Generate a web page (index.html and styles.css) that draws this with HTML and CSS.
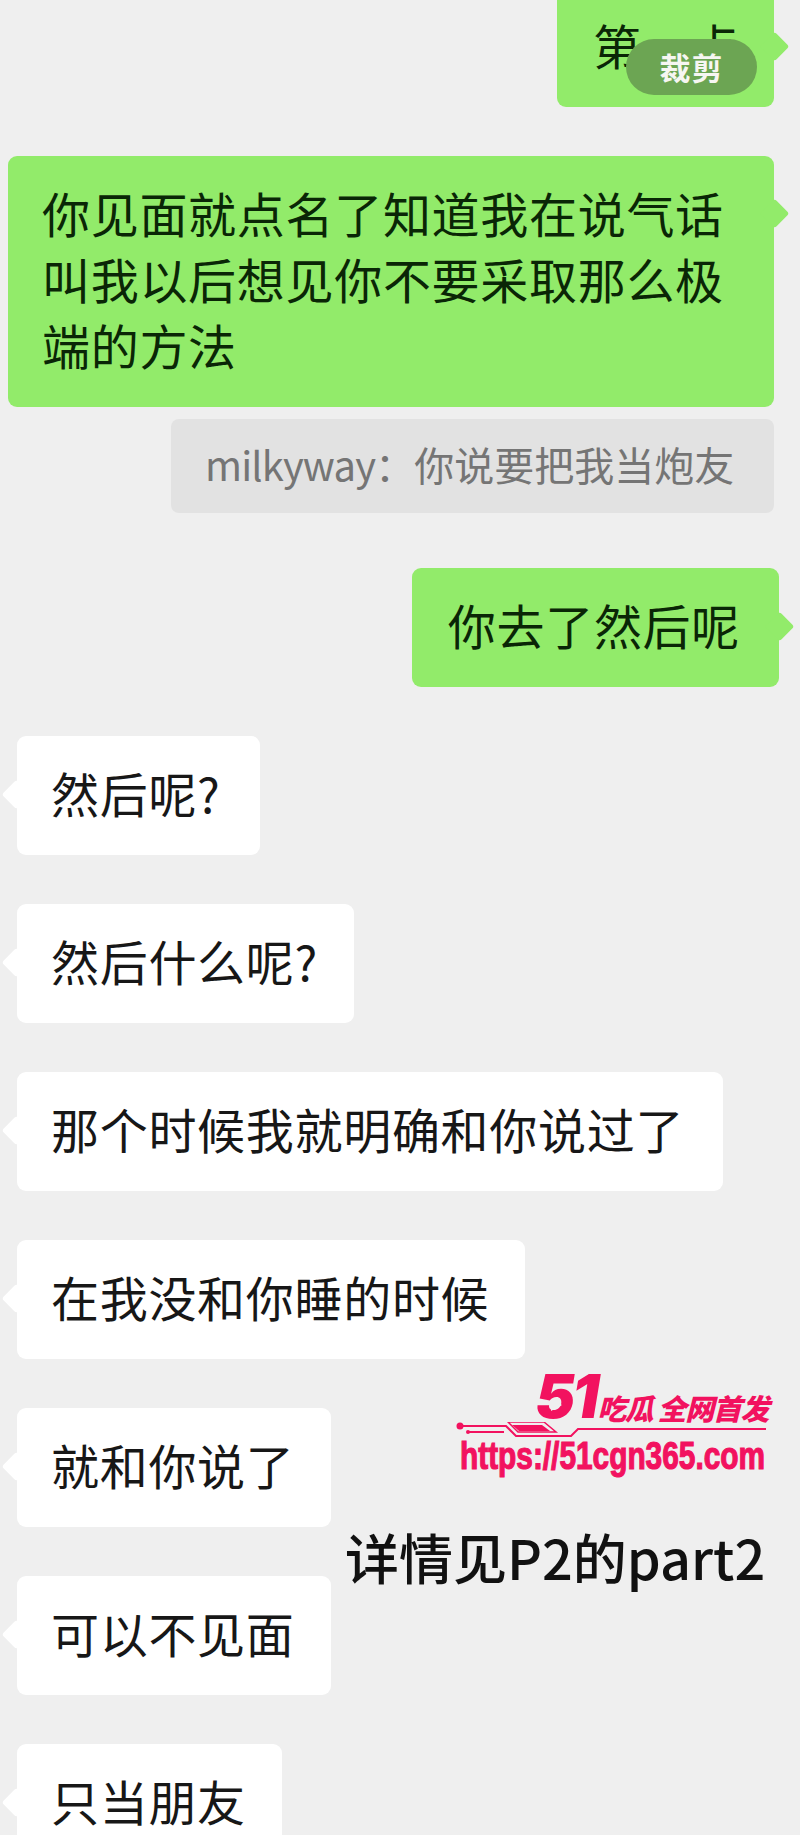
FILE: index.html
```html
<!DOCTYPE html>
<html lang="zh-CN">
<head>
<meta charset="utf-8">
<title>聊天记录</title>
<link rel="stylesheet" href="styles.css">
</head>
<body>
<main class="chat">
  <div class="row row-out">
    <div class="bubble out first">第一点<span class="crop">裁剪</span></div>
  </div>
  <div class="row row-out">
    <div class="bubble out wide">你见面就点名了知道我在说气话<br>叫我以后想见你不要采取那么极<br>端的方法</div>
  </div>
  <div class="row row-out row-quote">
    <div class="quote"><span class="quote-name">milkyway：</span>你说要把我当炮友</div>
  </div>
  <div class="row row-out row-after-quote">
    <div class="bubble out shifted">你去了然后呢</div>
  </div>
  <div class="row"><div class="bubble in roomy">然后呢?</div></div>
  <div class="row"><div class="bubble in">然后什么呢?</div></div>
  <div class="row"><div class="bubble in roomy">那个时候我就明确和你说过了</div></div>
  <div class="row"><div class="bubble in">在我没和你睡的时候</div></div>
  <div class="row"><div class="bubble in">就和你说了</div></div>
  <div class="row"><div class="bubble in">可以不见面</div></div>
  <div class="row"><div class="bubble in">只当朋友</div></div>
</main>

<aside class="stamp">
  <div class="stamp-top">
    <span class="stamp-num">51<svg class="stamp-play" width="14" height="14" viewBox="0 0 14 14" aria-hidden="true"><path d="M2 1L13 7L2 13Z" fill="#efefef"/></svg></span>
    <span class="stamp-slogan">吃瓜 全网首发</span>
  </div>
  <svg class="stamp-circuit" width="312" height="16" viewBox="0 0 312 16" aria-hidden="true">
    <circle cx="4" cy="4" r="3.5" fill="#f2125f"/>
    <circle cx="12" cy="10" r="2" fill="#f2125f"/>
    <path d="M6 4H50L60 14H115L122 7H310M12 10H48" fill="none" stroke="#f2125f" stroke-width="2"/>
    <path d="M52 0H88L100 10H62Z" fill="none" stroke="#f2125f" stroke-width="1.5"/>
    <path d="M56 3H86L94 9H63Z" fill="#f2125f"/>
  </svg>
  <div class="stamp-url">https://51cgn365.com</div>
</aside>
<p class="note">详情见P2的part2</p>
</body>
</html>
```
FILE: styles.css
```css
html, body {
  margin: 0;
  height: 1835px;
  overflow: hidden;
  background: #efefef;
}

body {
  position: relative;
  font-family: "Noto Sans CJK SC", "Noto Sans", sans-serif;
}

.chat {
  display: flex;
  flex-direction: column;
  gap: 49px;
  margin-top: -12px;
  padding: 0 26px 0 17px;
}

.row {
  display: flex;
  flex: none;
}

.row-out {
  justify-content: flex-end;
}

.row-quote {
  margin-top: -37px;
}

.row-after-quote {
  margin-top: 6px;
}

.bubble {
  position: relative;
  box-sizing: border-box;
  flex: none;
  height: 119px;
  padding: 24px 36px 0 34px;
  border-radius: 9px;
  font-size: 48px;
  line-height: 64px;
  letter-spacing: 0.7px;
  white-space: nowrap;
}

.bubble::after {
  content: "";
  position: absolute;
  top: 48px;
  width: 21px;
  height: 21px;
  border-radius: 3px;
  transform: rotate(45deg);
}

.out {
  background: #92eb6a;
  color: #0a2606;
}

.out::after {
  right: -11px;
  background: #92eb6a;
}

.in {
  background: #fff;
  color: #171717;
}

.in::after {
  left: -11px;
  background: #fff;
}

.roomy {
  padding-right: 39px;
}

.first {
  width: 217px;
  padding-left: 36px;
}

.crop {
  position: absolute;
  top: 51px;
  left: 69px;
  display: flex;
  align-items: center;
  justify-content: center;
  width: 131px;
  height: 56px;
  padding-bottom: 2px;
  box-sizing: border-box;
  border-radius: 28px;
  background: #6ca553;
  color: #f6f6f2;
  font-size: 31px;
  font-weight: 700;
  line-height: 1;
  letter-spacing: 1px;
  z-index: 1;
}

.wide {
  width: 766px;
  height: 251px;
  margin-left: -9px;
  padding: 23px 36px 0 34px;
  line-height: 66px;
}

.wide::after {
  top: 47px;
}

.shifted {
  margin-right: -5px;
  padding: 24px 39px 0 36px;
}

.quote {
  box-sizing: border-box;
  width: 603px;
  height: 94px;
  padding: 0 34px;
  border-radius: 8px;
  background: #e2e2e2;
  color: #757575;
  font-size: 40px;
  line-height: 90px;
  white-space: nowrap;
}

.quote-name {
  letter-spacing: -0.9px;
}

.stamp {
  position: absolute;
  left: 456px;
  top: 1370px;
  width: 316px;
  color: #f2125f;
}

.stamp-top {
  display: flex;
  align-items: flex-end;
  justify-content: flex-end;
  height: 52px;
  padding-right: 4px;
}

.stamp-num {
  position: relative;
  font-family: "Inter", "Liberation Sans", sans-serif;
  font-size: 60px;
  font-weight: 900;
  font-style: italic;
  line-height: 52px;
  letter-spacing: -3px;
  margin-right: 1px;
}

.stamp-play {
  position: absolute;
  left: 14px;
  top: 28px;
}

.stamp-slogan {
  font-size: 29px;
  font-weight: 900;
  font-style: italic;
  line-height: 30px;
  letter-spacing: -1.4px;
  white-space: nowrap;
}

.stamp-circuit {
  display: block;
}

.stamp-url {
  font-family: "Liberation Sans", sans-serif;
  font-size: 38px;
  font-weight: 700;
  line-height: 36px;
  white-space: nowrap;
  transform: scaleX(0.785);
  transform-origin: left center;
  margin-left: 4px;
  -webkit-text-stroke: 1.2px #f2125f;
}

.note {
  position: absolute;
  left: 345px;
  top: 1522px;
  margin: 0;
  color: #111;
  font-size: 54px;
  font-weight: 500;
  line-height: 70px;
  white-space: nowrap;
}
```
